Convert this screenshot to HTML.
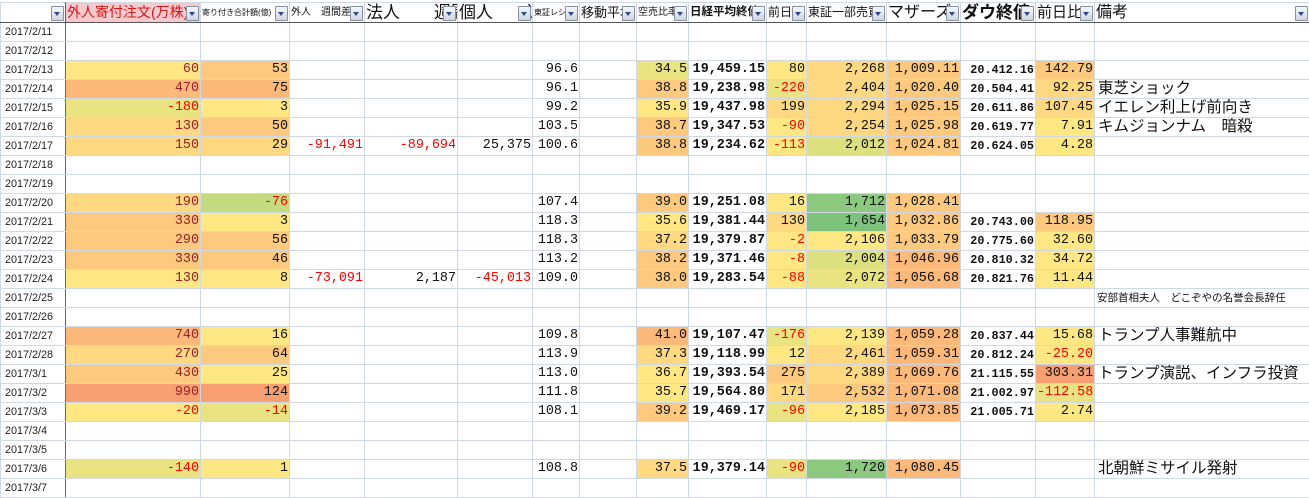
<!DOCTYPE html>
<html><head><meta charset="utf-8"><style>
body{margin:0;background:#fff;width:1309px;height:486px;overflow:hidden;font-family:"Liberation Sans","Noto Sans CJK JP",sans-serif}
table{border-collapse:collapse;table-layout:fixed;position:absolute;left:0;top:2px;width:1309px}
td{border:1px solid #d0d7e5;padding:0 1px;height:18px;line-height:18px;white-space:nowrap;overflow:hidden;font-family:"Liberation Mono","Noto Sans CJK JP",monospace;font-size:13.4px;text-align:right;color:#111;position:relative;box-sizing:border-box}
td.d{font-family:"Liberation Sans",sans-serif;font-size:10.8px;text-align:left;padding-left:4px;color:#222;border-right:1px solid #666}
td.b{font-weight:bold}
td.nb{font-weight:bold;font-size:11.8px}
td.p{text-align:left;font-family:"Liberation Sans","Noto Sans CJK JP",sans-serif;font-size:15.5px;padding-left:3px}
td.ps{text-align:left;font-family:"Liberation Sans","Noto Sans CJK JP",sans-serif;font-size:10.5px;padding-left:2px}
tr.h td{height:19px;border-bottom:1px solid #555;text-align:left;font-family:"Liberation Sans","Noto Sans CJK JP",sans-serif;padding-left:1px;vertical-align:bottom;line-height:19px}
.bt{position:absolute;right:1px;top:3px;width:11px;height:13px;border:1px solid #8792a8;background:linear-gradient(#f5f7fa,#cfd5de);border-radius:1px}
.bt:after{content:"";position:absolute;left:2px;top:5px;border-left:3.5px solid transparent;border-right:3.5px solid transparent;border-top:4px solid #2b4a8a}
.y{background:#FFE884}.yo{background:#FED981}.o{background:#FDC97E}.do{background:#FCB97A}.r{background:#F9A073}
.yg{background:#EAE382}.lg{background:#C4DA7F}.g{background:#8CC87D}.g2{background:#7DC37B}.yl{background:#DCE07F}
.rd{color:#f00}.dr{color:#9c1f2a}
</style></head><body>
<table>
<colgroup><col style="width:65px"><col style="width:135px"><col style="width:89px"><col style="width:75px"><col style="width:93px"><col style="width:75px"><col style="width:47px"><col style="width:57px"><col style="width:52px"><col style="width:78px"><col style="width:40px"><col style="width:80px"><col style="width:74px"><col style="width:75px"><col style="width:59px"><col style="width:215px"></colgroup>
<tr class="h">
<td class="d" style="border-bottom:1px solid #555"><span class="bt"></span></td>
<td style="background:#F8C9CC;color:#d01818;font-size:14px">外人寄付注文(万株)<span class="bt"></span></td>
<td style="font-size:8px">寄り付き合計額(億)<span class="bt"></span></td>
<td style="font-size:10px">外人　週間差<span class="bt"></span></td>
<td style="font-size:17px">法人　　週間<span class="bt"></span></td>
<td style="font-size:17px">個人　　週<span class="bt"></span></td>
<td style="font-size:8px">東証レシオ<span class="bt"></span></td>
<td style="font-size:13px">移動平均<span class="bt"></span></td>
<td style="font-size:10px">空売比率<span class="bt"></span></td>
<td style="font-size:11.5px;font-weight:bold">日経平均終値<span class="bt"></span></td>
<td style="font-size:12px">前日比<span class="bt"></span></td>
<td style="font-size:12px">東証一部売買<span class="bt"></span></td>
<td style="font-size:16px">マザーズ<span class="bt"></span></td>
<td style="font-size:17px;font-weight:bold">ダウ終値<span class="bt"></span></td>
<td style="font-size:15px">前日比<span class="bt"></span></td>
<td style="font-size:16px">備考<span class="bt"></span></td>
</tr>
<tr><td class="d">2017/2/11</td><td></td><td></td><td></td><td></td><td></td><td></td><td></td><td></td><td></td><td></td><td></td><td></td><td></td><td></td><td></td></tr>
<tr><td class="d">2017/2/12</td><td></td><td></td><td></td><td></td><td></td><td></td><td></td><td></td><td></td><td></td><td></td><td></td><td></td><td></td><td></td></tr>
<tr><td class="d">2017/2/13</td><td class="y dr">60</td><td class="o">53</td><td></td><td></td><td></td><td>96.6</td><td></td><td class="yg">34.5</td><td class="b">19,459.15</td><td class="y">80</td><td class="yo">2,268</td><td class="o">1,009.11</td><td class="nb">20.412.16</td><td class="o">142.79</td><td></td></tr>
<tr><td class="d">2017/2/14</td><td class="do dr">470</td><td class="do">75</td><td></td><td></td><td></td><td>96.1</td><td></td><td class="o">38.8</td><td class="b">19,238.98</td><td class="yg rd">-220</td><td class="yo">2,404</td><td class="o">1,020.40</td><td class="nb">20.504.41</td><td class="yo">92.25</td><td class="p">東芝ショック</td></tr>
<tr><td class="d">2017/2/15</td><td class="yg rd">-180</td><td class="y">3</td><td></td><td></td><td></td><td>99.2</td><td></td><td class="y">35.9</td><td class="b">19,437.98</td><td class="yo">199</td><td class="yo">2,294</td><td class="o">1,025.15</td><td class="nb">20.611.86</td><td class="yo">107.45</td><td class="p">イエレン利上げ前向き</td></tr>
<tr><td class="d">2017/2/16</td><td class="yo dr">130</td><td class="o">50</td><td></td><td></td><td></td><td>103.5</td><td></td><td class="o">38.7</td><td class="b">19,347.53</td><td class="y rd">-90</td><td class="yo">2,254</td><td class="o">1,025.98</td><td class="nb">20.619.77</td><td class="y">7.91</td><td class="p">キムジョンナム　暗殺</td></tr>
<tr><td class="d">2017/2/17</td><td class="yo dr">150</td><td class="yo">29</td><td class="rd">-91,491</td><td class="rd">-89,694</td><td>25,375</td><td>100.6</td><td></td><td class="o">38.8</td><td class="b">19,234.62</td><td class="y rd">-113</td><td class="yl">2,012</td><td class="o">1,024.81</td><td class="nb">20.624.05</td><td class="y">4.28</td><td></td></tr>
<tr><td class="d">2017/2/18</td><td></td><td></td><td></td><td></td><td></td><td></td><td></td><td></td><td></td><td></td><td></td><td></td><td></td><td></td><td></td></tr>
<tr><td class="d">2017/2/19</td><td></td><td></td><td></td><td></td><td></td><td></td><td></td><td></td><td></td><td></td><td></td><td></td><td></td><td></td><td></td></tr>
<tr><td class="d">2017/2/20</td><td class="yo dr">190</td><td class="lg rd">-76</td><td></td><td></td><td></td><td>107.4</td><td></td><td class="o">39.0</td><td class="b">19,251.08</td><td class="y">16</td><td class="g">1,712</td><td class="o">1,028.41</td><td></td><td></td><td></td></tr>
<tr><td class="d">2017/2/21</td><td class="o dr">330</td><td class="y">3</td><td></td><td></td><td></td><td>118.3</td><td></td><td class="y">35.6</td><td class="b">19,381.44</td><td class="yo">130</td><td class="g2">1,654</td><td class="o">1,032.86</td><td class="nb">20.743.00</td><td class="o">118.95</td><td></td></tr>
<tr><td class="d">2017/2/22</td><td class="o dr">290</td><td class="o">56</td><td></td><td></td><td></td><td>118.3</td><td></td><td class="yo">37.2</td><td class="b">19,379.87</td><td class="y rd">-2</td><td class="y">2,106</td><td class="o">1,033.79</td><td class="nb">20.775.60</td><td class="y">32.60</td><td></td></tr>
<tr><td class="d">2017/2/23</td><td class="o dr">330</td><td class="o">46</td><td></td><td></td><td></td><td>113.2</td><td></td><td class="o">38.2</td><td class="b">19,371.46</td><td class="y rd">-8</td><td class="yl">2,004</td><td class="do">1,046.96</td><td class="nb">20.810.32</td><td class="y">34.72</td><td></td></tr>
<tr><td class="d">2017/2/24</td><td class="y dr">130</td><td class="y">8</td><td class="rd">-73,091</td><td>2,187</td><td class="rd">-45,013</td><td>109.0</td><td></td><td class="o">38.0</td><td class="b">19,283.54</td><td class="y rd">-88</td><td class="yg">2,072</td><td class="do">1,056.68</td><td class="nb">20.821.76</td><td class="y">11.44</td><td></td></tr>
<tr><td class="d">2017/2/25</td><td></td><td></td><td></td><td></td><td></td><td></td><td></td><td></td><td></td><td></td><td></td><td></td><td></td><td></td><td class="ps">安部首相夫人　どこぞやの名誉会長辞任</td></tr>
<tr><td class="d">2017/2/26</td><td></td><td></td><td></td><td></td><td></td><td></td><td></td><td></td><td></td><td></td><td></td><td></td><td></td><td></td><td></td></tr>
<tr><td class="d">2017/2/27</td><td class="do dr">740</td><td class="y">16</td><td></td><td></td><td></td><td>109.8</td><td></td><td class="do">41.0</td><td class="b">19,107.47</td><td class="yg rd">-176</td><td class="y">2,139</td><td class="do">1,059.28</td><td class="nb">20.837.44</td><td class="y">15.68</td><td class="p">トランプ人事難航中</td></tr>
<tr><td class="d">2017/2/28</td><td class="yo dr">270</td><td class="o">64</td><td></td><td></td><td></td><td>113.9</td><td></td><td class="yo">37.3</td><td class="b">19,118.99</td><td class="y">12</td><td class="yo">2,461</td><td class="do">1,059.31</td><td class="nb">20.812.24</td><td class="y rd">-25.20</td><td></td></tr>
<tr><td class="d">2017/3/1</td><td class="o dr">430</td><td class="y">25</td><td></td><td></td><td></td><td>113.0</td><td></td><td class="y">36.7</td><td class="b">19,393.54</td><td class="o">275</td><td class="yo">2,389</td><td class="do">1,069.76</td><td class="nb">21.115.55</td><td class="r">303.31</td><td class="p">トランプ演説、インフラ投資</td></tr>
<tr><td class="d">2017/3/2</td><td class="r dr">990</td><td class="r">124</td><td></td><td></td><td></td><td>111.8</td><td></td><td class="y">35.7</td><td class="b">19,564.80</td><td class="yo">171</td><td class="o">2,532</td><td class="do">1,071.08</td><td class="nb">21.002.97</td><td class="yg rd">-112.58</td><td></td></tr>
<tr><td class="d">2017/3/3</td><td class="y rd">-20</td><td class="yg rd">-14</td><td></td><td></td><td></td><td>108.1</td><td></td><td class="o">39.2</td><td class="b">19,469.17</td><td class="yg rd">-96</td><td class="y">2,185</td><td class="do">1,073.85</td><td class="nb">21.005.71</td><td class="y">2.74</td><td></td></tr>
<tr><td class="d">2017/3/4</td><td></td><td></td><td></td><td></td><td></td><td></td><td></td><td></td><td></td><td></td><td></td><td></td><td></td><td></td><td></td></tr>
<tr><td class="d">2017/3/5</td><td></td><td></td><td></td><td></td><td></td><td></td><td></td><td></td><td></td><td></td><td></td><td></td><td></td><td></td><td></td></tr>
<tr><td class="d">2017/3/6</td><td class="yg rd">-140</td><td class="y">1</td><td></td><td></td><td></td><td>108.8</td><td></td><td class="yo">37.5</td><td class="b">19,379.14</td><td class="yg rd">-90</td><td class="g">1,720</td><td class="do">1,080.45</td><td></td><td></td><td class="p">北朝鮮ミサイル発射</td></tr>
<tr><td class="d">2017/3/7</td><td></td><td></td><td></td><td></td><td></td><td></td><td></td><td></td><td></td><td></td><td></td><td></td><td></td><td></td><td></td></tr>
</table>
</body></html>
